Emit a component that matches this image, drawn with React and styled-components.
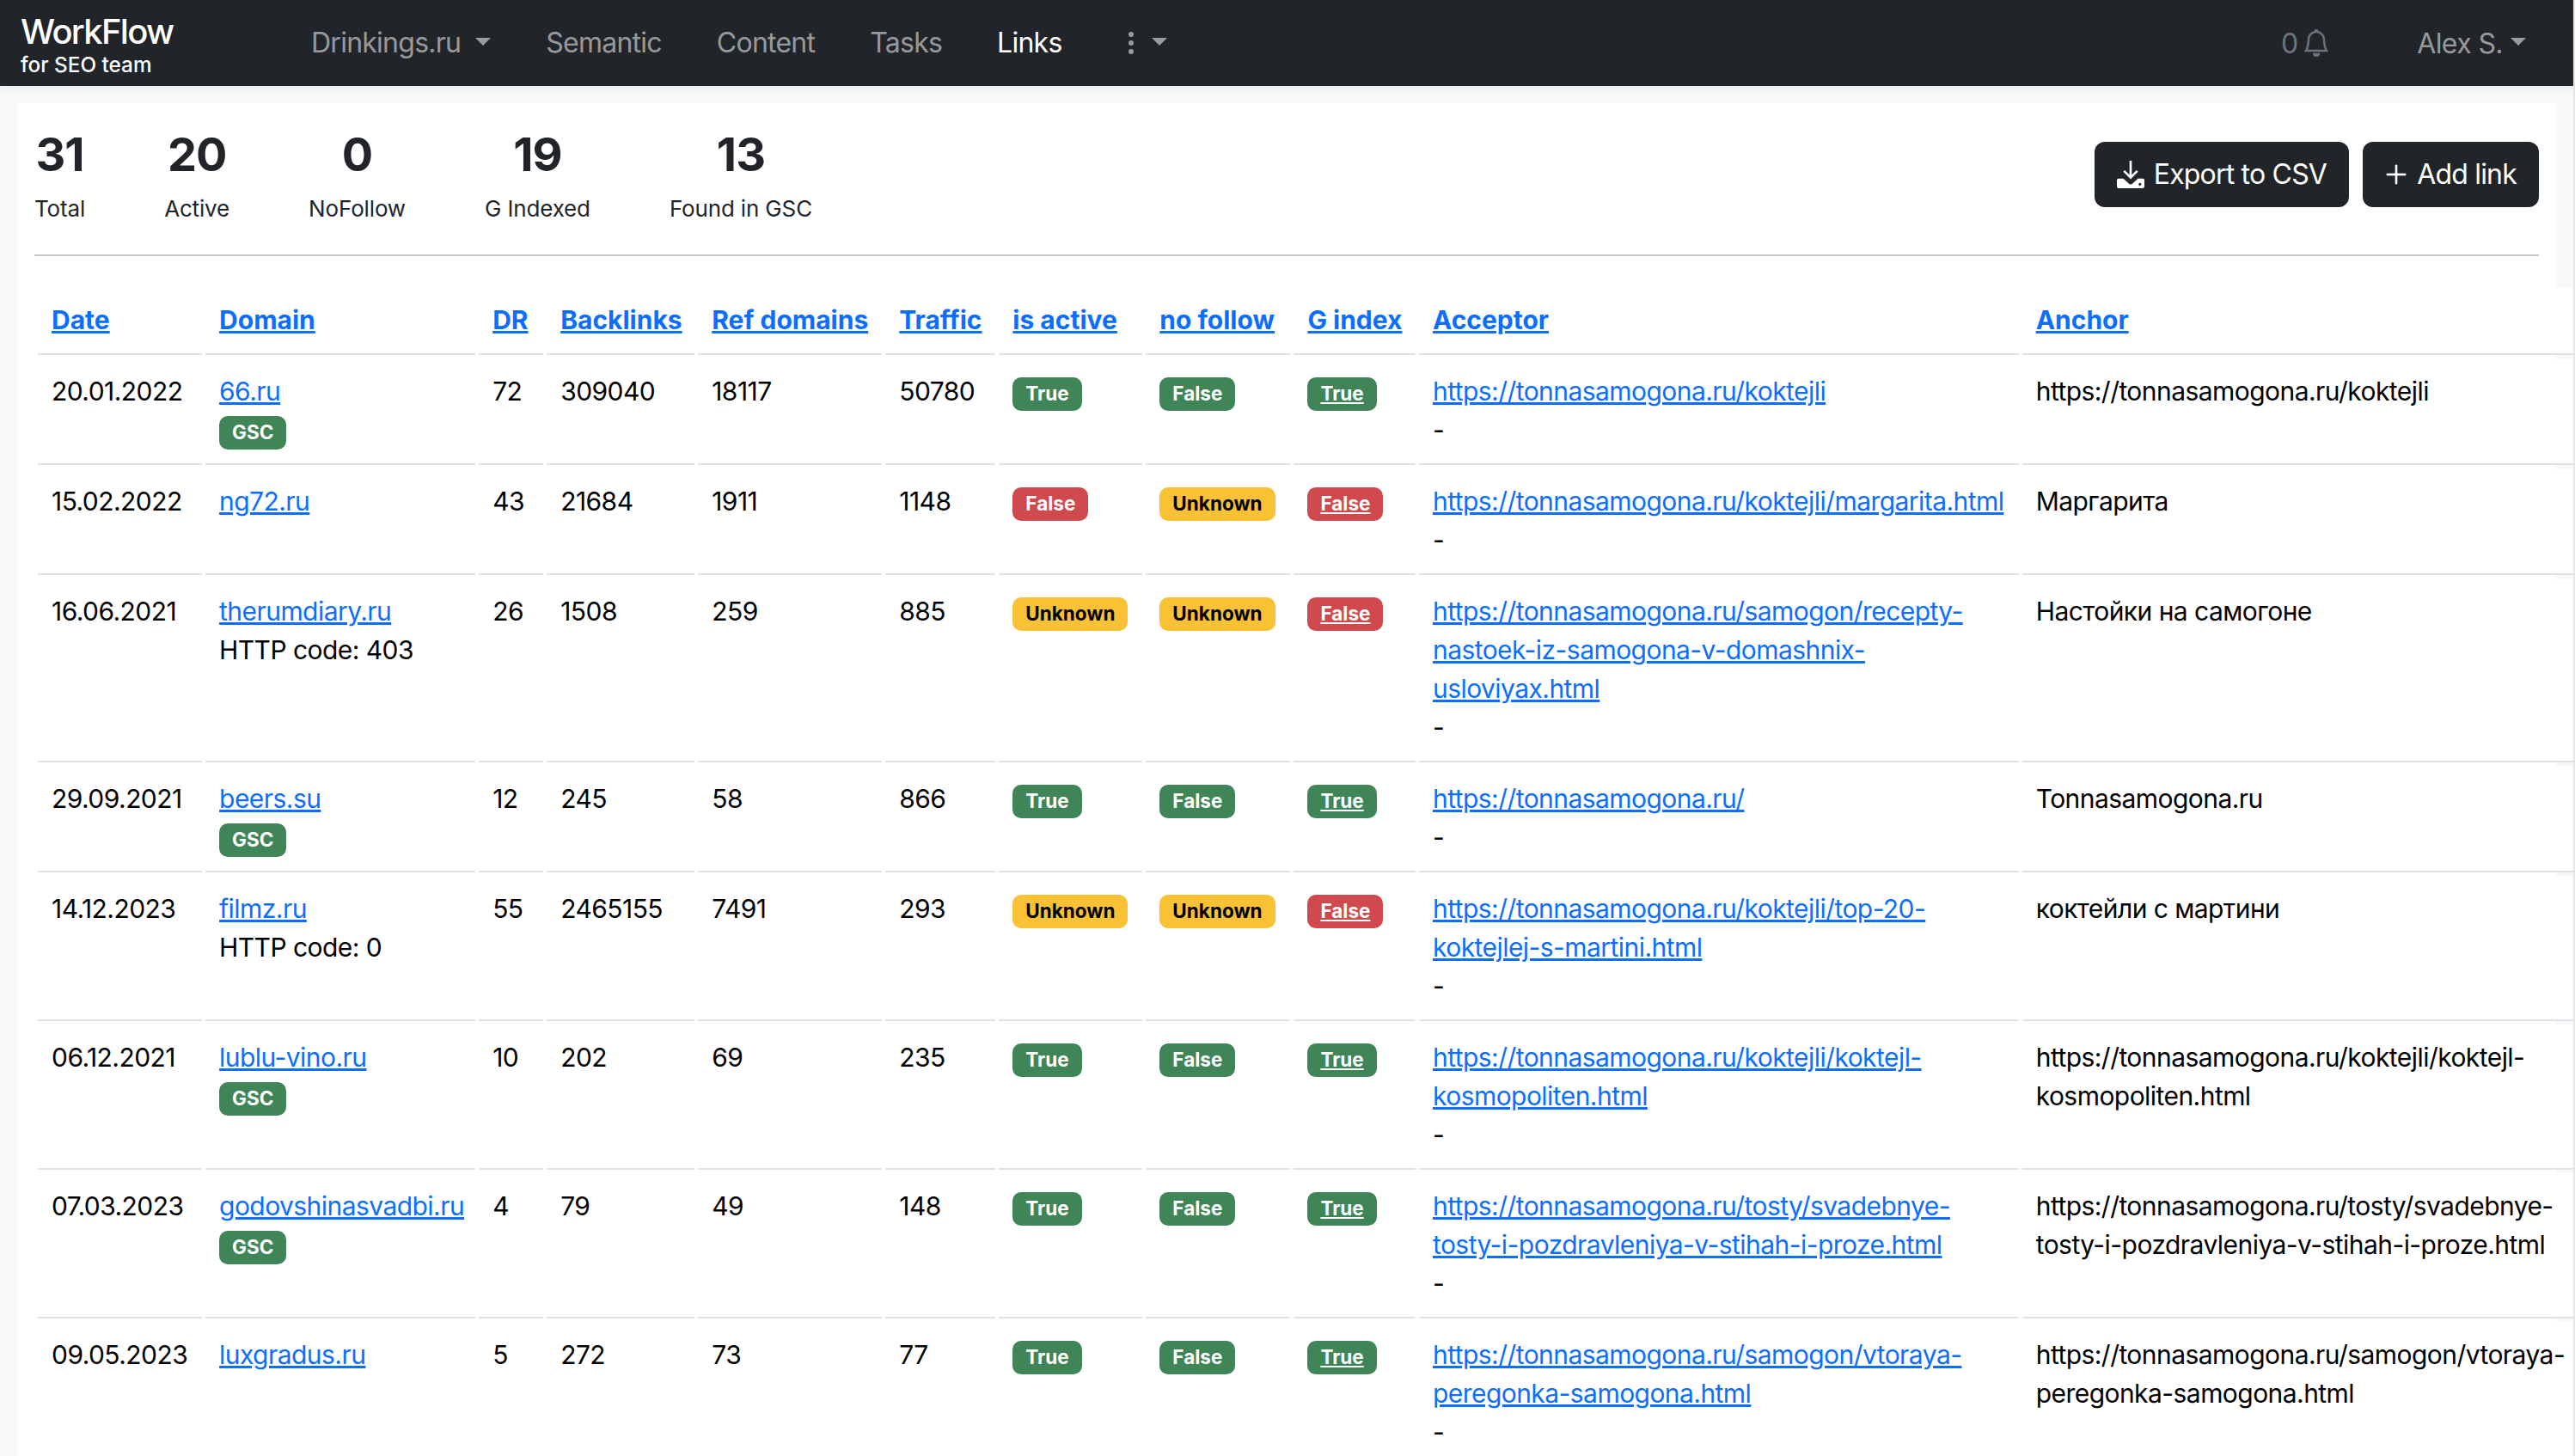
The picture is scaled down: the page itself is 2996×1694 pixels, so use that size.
import React from "react";
import styled, { createGlobalStyle } from "styled-components";
import { BsBell, BsPlusLg, BsThreeDotsVertical } from "react-icons/bs";

const GlobalStyle = createGlobalStyle`
  html, body {
    margin: 0;
    height: 100%;
    background: #fff;
  }
  * {
    box-sizing: border-box;
  }
`;

const navItems = [
  { label: "Drinkings.ru", caret: true },
  { label: "Semantic" },
  { label: "Content" },
  { label: "Tasks" },
  { label: "Links", active: true },
];

const stats = [
  { value: 31, label: "Total" },
  { value: 20, label: "Active" },
  { value: 0, label: "NoFollow" },
  { value: 19, label: "G Indexed" },
  { value: 13, label: "Found in GSC" },
];

const columns = [
  { title: "Date", width: 191 },
  { title: "Domain", width: 314 },
  { title: "DR", width: 75 },
  { title: "Backlinks", width: 172 },
  { title: "Ref domains", width: 214 },
  { title: "Traffic", width: 128 },
  { title: "is active", width: 167 },
  { title: "no follow", width: 168 },
  { title: "G index", width: 141.5 },
  { title: "Acceptor", width: 697.5 },
  { title: "Anchor", width: 660 },
];

const base = "https://tonnasamogona.ru/";

const links = [
  { date: "20.01.2022", domain: "66.ru", gsc: true, dr: 72, backlinks: 309040, refs: 18117, traffic: 50780, active: "True", follow: "False", index: "True", acceptor: base + "koktejli", anchor: base + "koktejli" },
  { date: "15.02.2022", domain: "ng72.ru", dr: 43, backlinks: 21684, refs: 1911, traffic: 1148, active: "False", follow: "Unknown", index: "False", acceptor: base + "koktejli/margarita.html", anchor: "Маргарита" },
  { date: "16.06.2021", domain: "therumdiary.ru", code: 403, dr: 26, backlinks: 1508, refs: 259, traffic: 885, active: "Unknown", follow: "Unknown", index: "False", acceptor: base + "samogon/recepty-nastoek-iz-samogona-v-domashnix-usloviyax.html", anchor: "Настойки на самогоне" },
  { date: "29.09.2021", domain: "beers.su", gsc: true, dr: 12, backlinks: 245, refs: 58, traffic: 866, active: "True", follow: "False", index: "True", acceptor: base, anchor: "Tonnasamogona.ru" },
  { date: "14.12.2023", domain: "filmz.ru", code: 0, dr: 55, backlinks: 2465155, refs: 7491, traffic: 293, active: "Unknown", follow: "Unknown", index: "False", acceptor: base + "koktejli/top-20-koktejlej-s-martini.html", anchor: "коктейли с мартини" },
  { date: "06.12.2021", domain: "lublu-vino.ru", gsc: true, dr: 10, backlinks: 202, refs: 69, traffic: 235, active: "True", follow: "False", index: "True", acceptor: base + "koktejli/koktejl-kosmopoliten.html", anchor: base + "koktejli/koktejl-kosmopoliten.html" },
  { date: "07.03.2023", domain: "godovshinasvadbi.ru", gsc: true, dr: 4, backlinks: 79, refs: 49, traffic: 148, active: "True", follow: "False", index: "True", acceptor: base + "tosty/svadebnye-tosty-i-pozdravleniya-v-stihah-i-proze.html", anchor: base + "tosty/svadebnye-tosty-i-pozdravleniya-v-stihah-i-proze.html" },
  { date: "09.05.2023", domain: "luxgradus.ru", dr: 5, backlinks: 272, refs: 73, traffic: 77, active: "True", follow: "False", index: "True", acceptor: base + "samogon/vtoraya-peregonka-samogona.html", anchor: base + "samogon/vtoraya-peregonka-samogona.html" },
];

const badgeColors = {
  True: { bg: "#408558", fg: "#fff" },
  False: { bg: "#408558", fg: "#fff" },
  Bad: { bg: "#d0494c", fg: "#fff" },
  Unknown: { bg: "#f9c236", fg: "#000" },
};

const Page = styled.div`
  width: 100%;
  height: 100vh;
  overflow: hidden;
  background: #f7f8fa;
  border-right: 2px solid #e6e6e6;
  font-family: Inter, "Noto Sans", sans-serif;
  font-size: 30px;
  line-height: 45px;
  color: #000;
`;

const Navbar = styled.nav`
  position: relative;
  z-index: 1;
  display: flex;
  align-items: center;
  height: 100px;
  padding: 0 55px 0 24px;
  background: #212529;
  box-shadow: 0 4px 8px rgba(0, 0, 0, 0.05);
`;

const Brand = styled.div`
  display: flex;
  flex-direction: column;
  width: 177px;
  margin-right: 129px;
  padding-top: 1px;
  color: #fff;
`;

const BrandName = styled.span`
  font-size: 40px;
  font-weight: 500;
  line-height: 48px;
  letter-spacing: -1.7px;
`;

const BrandSub = styled.span`
  font-size: 24.3px;
  font-weight: 500;
  line-height: 28px;
  white-space: nowrap;
`;

const NavItem = styled.a`
  display: flex;
  align-items: center;
  padding: 0 32px;
  font-size: 32px;
  line-height: 48px;
  letter-spacing: -0.75px;
  color: ${(p) => (p.$active ? "#fff" : "rgba(255, 255, 255, 0.55)")};
`;

const Caret = styled.i`
  display: inline-block;
  margin-left: ${(p) => p.$gap || 17}px;
  margin-bottom: 4px;
  border-top: 9px solid rgba(255, 255, 255, 0.55);
  border-left: 9.5px solid transparent;
  border-right: 9.5px solid transparent;
`;

const DotsIcon = styled(BsThreeDotsVertical)`
  width: 32px;
  height: 32px;
`;

const NavRight = styled.div`
  display: flex;
  align-items: center;
  margin-left: auto;
`;

const Notice = styled.div`
  display: flex;
  align-items: center;
  gap: 5px;
  margin-right: 101px;
  font-size: 32px;
  color: #6c757d;
`;

const BellIcon = styled(BsBell)`
  width: 32px;
  height: 32px;
  stroke: currentColor;
  stroke-width: 0.25;
`;

const User = styled.div`
  display: flex;
  align-items: center;
  font-size: 32px;
  letter-spacing: -0.6px;
  color: rgba(255, 255, 255, 0.55);
`;

const Card = styled.main`
  margin: 20px 0 0 20px;
  width: 2954px;
  min-height: 1574px;
  padding: 20px;
  background: #fff;
`;

const Summary = styled.section`
  display: flex;
  align-items: center;
  padding-bottom: 31px;
  border-bottom: 2px solid #c6c6c6;
  margin-bottom: 32px;
`;

const StatRow = styled.div`
  display: flex;
  gap: 92px;
`;

const Stat = styled.div`
  text-align: center;
  color: #212529;
`;

const StatValue = styled.div`
  font-size: 54px;
  font-weight: 700;
  line-height: 80px;
  letter-spacing: -1px;
`;

const StatLabel = styled.div`
  font-size: 26px;
  line-height: 45px;
  letter-spacing: -0.15px;
`;

const Actions = styled.div`
  display: flex;
  gap: 16px;
  margin-left: auto;
`;

const Button = styled.button`
  display: flex;
  align-items: center;
  gap: 11px;
  height: 76px;
  padding: 0 26px;
  border: 0;
  border-radius: 12px;
  background: #212529;
  color: #fff;
  font-family: inherit;
  font-size: 32px;
  letter-spacing: -0.8px;
`;

const PlusIcon = styled(BsPlusLg)`
  width: 30px;
  height: 30px;
  margin: 0 -2px;
  stroke: currentColor;
  stroke-width: 0.4;
`;

const Table = styled.table`
  table-layout: fixed;
  width: 2977px;
  border-collapse: separate;
  border-spacing: 4px;
`;

const Col = styled.col`
  width: ${(p) => p.$width}px;
`;

const Th = styled.th`
  padding: 16px;
  border-bottom: 2px solid #dee2e6;
  background: #fff;
  font-weight: 700;
  text-align: left;
  vertical-align: top;
  white-space: nowrap;
`;

const Td = styled.td`
  padding: 16px;
  border-bottom: 2px solid #dee2e6;
  background: #fff;
  vertical-align: top;
  letter-spacing: -0.55px;
`;

const TextLink = styled.a`
  color: #0d6efd;
  text-decoration: underline;
`;

const Badge = styled.span`
  display: inline-block;
  padding: 8px 15px;
  border-radius: 10px;
  background: ${(p) => p.$bg};
  color: ${(p) => p.$fg};
  font-size: 22.5px;
  font-weight: 700;
  line-height: 1;
  letter-spacing: 0;
  text-decoration: ${(p) => (p.$linked ? "underline" : "none")};
`;

const colorFor = (value, column) => {
  if (value === "Unknown") return badgeColors.Unknown;
  if (value === "False" && column !== "follow") return badgeColors.Bad;
  return badgeColors[value];
};

const DownloadIcon = () => (
  <svg width="32" height="32" viewBox="0 0 34 34" fill="#fff">
    <path d="M15.6 0h2.800v17.400l5.800-5.800 2 2-9.200 9.200-9.200-9.200 2-2 5.800 5.800z" />
    <path d="M0 24c0-1 .8-2 2-2h6l6.500 6.200c1.400 1.200 3.600 1.200 5 0L26 22h6c1.200 0 2 1 2 2v8c0 1.200-.8 2-2 2H2c-1.200 0-2-.8-2-2z" />
    <circle cx="28.500" cy="29" r="1.700" fill="#212529" />
  </svg>
);

const StatusBadge = ({ value, column, linked }) => {
  const color = colorFor(value, column);
  return (
    <Badge $bg={color.bg} $fg={color.fg} $linked={linked}>
      {value}
    </Badge>
  );
};

const App = () => {
  return (
    <Page>
      <GlobalStyle />
      <Navbar>
        <Brand>
          <BrandName>WorkFlow</BrandName>
          <BrandSub>for SEO team</BrandSub>
        </Brand>
        {navItems.map((item) => (
          <NavItem key={item.label} $active={item.active}>
            {item.label}
            {item.caret && <Caret />}
          </NavItem>
        ))}
        <NavItem>
          <DotsIcon />
          <Caret $gap={8} />
        </NavItem>
        <NavRight>
          <Notice>
            0
            <BellIcon />
          </Notice>
          <User>
            Alex S.
            <Caret $gap={9} />
          </User>
        </NavRight>
      </Navbar>
      <Card>
        <Summary>
          <StatRow>
            {stats.map((stat) => (
              <Stat key={stat.label}>
                <StatValue>{stat.value}</StatValue>
                <StatLabel>{stat.label}</StatLabel>
              </Stat>
            ))}
          </StatRow>
          <Actions>
            <Button>
              <DownloadIcon />
              Export to CSV
            </Button>
            <Button>
              <PlusIcon />
              Add link
            </Button>
          </Actions>
        </Summary>
        <Table>
          <colgroup>
            {columns.map((column) => (
              <Col key={column.title} $width={column.width} />
            ))}
          </colgroup>
          <thead>
            <tr>
              {columns.map((column) => (
                <Th key={column.title}>
                  <TextLink>{column.title}</TextLink>
                </Th>
              ))}
            </tr>
          </thead>
          <tbody>
            {links.map((link) => (
              <tr key={link.domain}>
                <Td>{link.date}</Td>
                <Td>
                  <TextLink>{link.domain}</TextLink>
                  <br />
                  {link.gsc && <Badge $bg="#408558" $fg="#fff">GSC</Badge>}
                  {link.code !== undefined && `HTTP code: ${link.code}`}
                </Td>
                <Td>{link.dr}</Td>
                <Td>{link.backlinks}</Td>
                <Td>{link.refs}</Td>
                <Td>{link.traffic}</Td>
                <Td>
                  <StatusBadge value={link.active} column="active" />
                </Td>
                <Td>
                  <StatusBadge value={link.follow} column="follow" />
                </Td>
                <Td>
                  <a>
                    <StatusBadge value={link.index} column="index" linked />
                  </a>
                </Td>
                <Td>
                  <TextLink>{link.acceptor}</TextLink>
                  <br />-
                </Td>
                <Td>{link.anchor}</Td>
              </tr>
            ))}
          </tbody>
        </Table>
      </Card>
    </Page>
  );
};

export default App;
